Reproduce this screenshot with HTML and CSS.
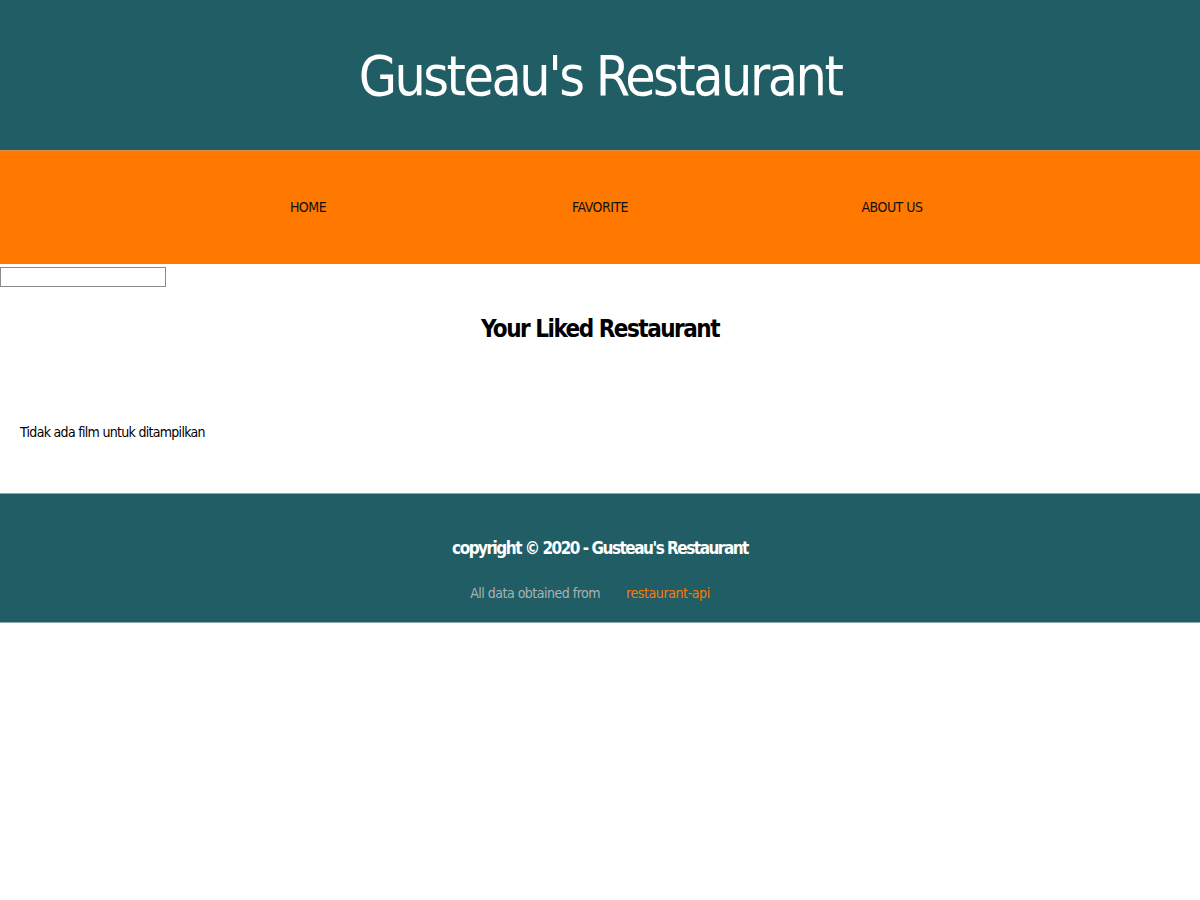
FILE: index.html
```html
<!DOCTYPE html>
<html lang="id">
<head>
<meta charset="utf-8">
<title>Gusteau's Restaurant</title>
<link rel="stylesheet" href="styles.css">
</head>
<body>
<header class="app-bar">
  <h1 class="app-title">Gusteau's Restaurant</h1>
</header>
<nav class="nav">
  <ul class="nav-list">
    <li class="nav-item"><a href="#">HOME</a></li>
    <li class="nav-item"><a href="#">FAVORITE</a></li>
    <li class="nav-item"><a href="#">ABOUT US</a></li>
  </ul>
</nav>
<main class="main">
  <input class="search" type="text">
  <h2 class="content-title">Your Liked Restaurant</h2>
  <div class="list">
    <p class="empty">Tidak ada film untuk ditampilkan</p>
  </div>
</main>
<footer class="footer">
  <p class="copyright">copyright © 2020 - Gusteau's Restaurant</p>
  <p class="source"><span class="source-text">All data obtained from</span><a class="source-link" href="#">restaurant-api</a></p>
</footer>
</body>
</html>
```
FILE: styles.css
```css
* { box-sizing: border-box; }
html, body { margin: 0; padding: 0; background: #fff; }
body {
  font-family: "DejaVu Sans Condensed", "DejaVu Sans", sans-serif;
  color: #000;
}
.app-bar {
  background: #205d64;
  height: 150px;
  display: flex;
  align-items: center;
  justify-content: center;
}
.app-title {
  margin: 0;
  color: #fff;
  font-weight: 400;
  font-size: 55px;
  line-height: 1;
  letter-spacing: -2.5px;
  padding-top: 2px;
}
.nav {
  background: #ff7800;
  height: 114px;
  border-top: 1px solid #d98a45;
  display: flex;
  align-items: center;
}
.nav-list {
  list-style: none;
  margin: 0 auto;
  padding: 0;
  width: 876px;
  display: flex;
  padding-bottom: 3px;
}
.nav-item {
  flex: 1;
  text-align: center;
}
.nav-item a {
  color: #111;
  text-decoration: none;
  font-size: 14px;
  letter-spacing: -0.5px;
}
.main {
  padding-top: 3px;
}
.search {
  display: block;
  width: 166px;
  height: 20px;
  margin: 0;
  border: 1px solid #8a8a8a;
  background: #fff;
}
.content-title {
  margin: 24px 0 0;
  text-align: center;
  font-size: 24px;
  line-height: 36px;
  font-weight: 700;
  letter-spacing: -1.5px;
}
.list {
  padding: 74px 20px 50px;
}
.empty {
  margin: 0;
  font-size: 14px;
  line-height: 22px;
  letter-spacing: -0.7px;
}
.footer {
  background: #205d64;
  border-top: 1px solid #8ea9ac;
  border-bottom: 1px solid #8ea9ac;
  height: 130px;
  text-align: center;
  padding-top: 40px;
}
.copyright {
  margin: 0;
  color: #fff;
  font-weight: 700;
  font-size: 17px;
  line-height: 28px;
  letter-spacing: -1.5px;
}
.source {
  margin: 20px 0 0;
  font-size: 14px;
  line-height: 22px;
  letter-spacing: -0.5px;
}
.source-text { color: #a9b3b3; margin-right: 26px; }
.source-link { color: #ff7800; text-decoration: none; letter-spacing: -0.4px; margin-right: 20px; }
```
